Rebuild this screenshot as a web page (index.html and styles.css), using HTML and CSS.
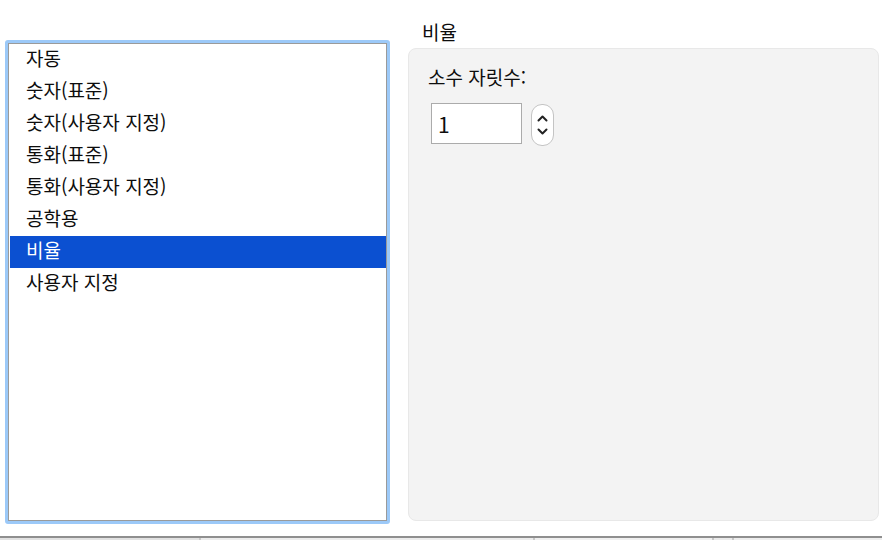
FILE: index.html
```html
<!DOCTYPE html>
<html lang="ko">
<head>
<meta charset="utf-8">
<link rel="stylesheet" href="styles.css">
</head>
<body>
<div class="page">
  <div class="main">
    <div class="left">
      <div class="list">
        <div class="list-inner">
          <div class="row">자동</div>
          <div class="row">숫자(표준)</div>
          <div class="row">숫자(사용자 지정)</div>
          <div class="row">통화(표준)</div>
          <div class="row">통화(사용자 지정)</div>
          <div class="row">공학용</div>
          <div class="row selected">비율</div>
          <div class="row">사용자 지정</div>
        </div>
      </div>
    </div>
    <div class="right">
      <div class="title">비율</div>
      <div class="panel">
        <div class="label">소수 자릿수:</div>
        <div class="field-row">
          <div class="input">1</div>
          <div class="stepper">
            <svg width="23" height="42" viewBox="0 0 23 42">
              <path d="M7.5 16.5 L11.5 12.5 L15.5 16.5" fill="none" stroke="#222" stroke-width="2" stroke-linecap="round" stroke-linejoin="round"/>
              <path d="M7.5 25.5 L11.5 29.5 L15.5 25.5" fill="none" stroke="#222" stroke-width="2" stroke-linecap="round" stroke-linejoin="round"/>
            </svg>
          </div>
        </div>
      </div>
    </div>
  </div>
  <div class="bottom">
    <div class="seg s1"></div>
    <div class="seg s2"></div>
    <div class="seg s3"></div>
    <div class="seg s4"></div>
    <div class="seg s5"></div>
  </div>
</div>
</body>
</html>
```
FILE: styles.css
```css
html, body {
  margin: 0;
  padding: 0;
  background: #ffffff;
}
body {
  font-family: "Noto Sans CJK KR", "Noto Sans", sans-serif;
  font-size: 19px;
  font-weight: 400;
  color: #0d0d0d;
  width: 882px;
  height: 540px;
  overflow: hidden;
}
.page {
  display: flex;
  flex-direction: column;
  height: 540px;
}
.main {
  display: flex;
  height: 536px;
}
.left {
  padding: 40px 0 0 5px;
}
.list {
  width: 385px;
  height: 484px;
  box-sizing: border-box;
  border: 3px solid #9cc9f8;
  border-radius: 3px;
}
.list-inner {
  height: 100%;
  box-sizing: border-box;
  border: 1px solid #9a9a9a;
  padding-left: 1px;
  background: #ffffff;
}
.row {
  height: 32px;
  box-sizing: border-box;
  line-height: 28px;
  padding-left: 16px;
  white-space: nowrap;
}
.row.selected {
  background: #0b50d1;
  color: #ffffff;
}
.right {
  margin-left: 18px;
  display: flex;
  flex-direction: column;
}
.title {
  height: 48px;
  box-sizing: border-box;
  padding: 18px 0 0 14px;
  line-height: 28px;
}
.panel {
  width: 471px;
  height: 473px;
  box-sizing: border-box;
  background: #f3f3f3;
  border: 1px solid #e8e8e8;
  border-radius: 8px;
  padding: 14px 0 0 19px;
}
.label {
  line-height: 28px;
}
.field-row {
  display: flex;
  align-items: flex-start;
  margin-top: 12px;
  padding-left: 3px;
  gap: 9px;
}
.input {
  width: 91px;
  height: 41px;
  box-sizing: border-box;
  background: #ffffff;
  border: 1px solid #ababab;
  padding-left: 6px;
  line-height: 40px;
  font-size: 21px;
}
.stepper {
  width: 23px;
  height: 42px;
  box-sizing: border-box;
  margin-top: 1px;
  border: 1px solid #c4c4c4;
  border-radius: 11px;
  background: #ffffff;
  display: flex;
  align-items: center;
  justify-content: center;
  overflow: hidden;
}
.stepper svg {
  display: block;
  flex: none;
}
.bottom {
  display: flex;
  height: 4px;
  border-top: 2px solid #8f8f8f;
  box-sizing: border-box;
  background: #e6e6e6;
}
.seg {
  height: 2px;
  border-right: 2px solid #c8c8c8;
  box-sizing: border-box;
}
.s1 { width: 201px; background: #e2e2e2; }
.s2 { width: 334px; background: #ececec; }
.s3 { width: 179px; background: #f0f0f0; }
.s4 { width: 20px; background: #ebebeb; }
.s5 { flex: 1; background: #eeeeee; border-right: none; }
```
